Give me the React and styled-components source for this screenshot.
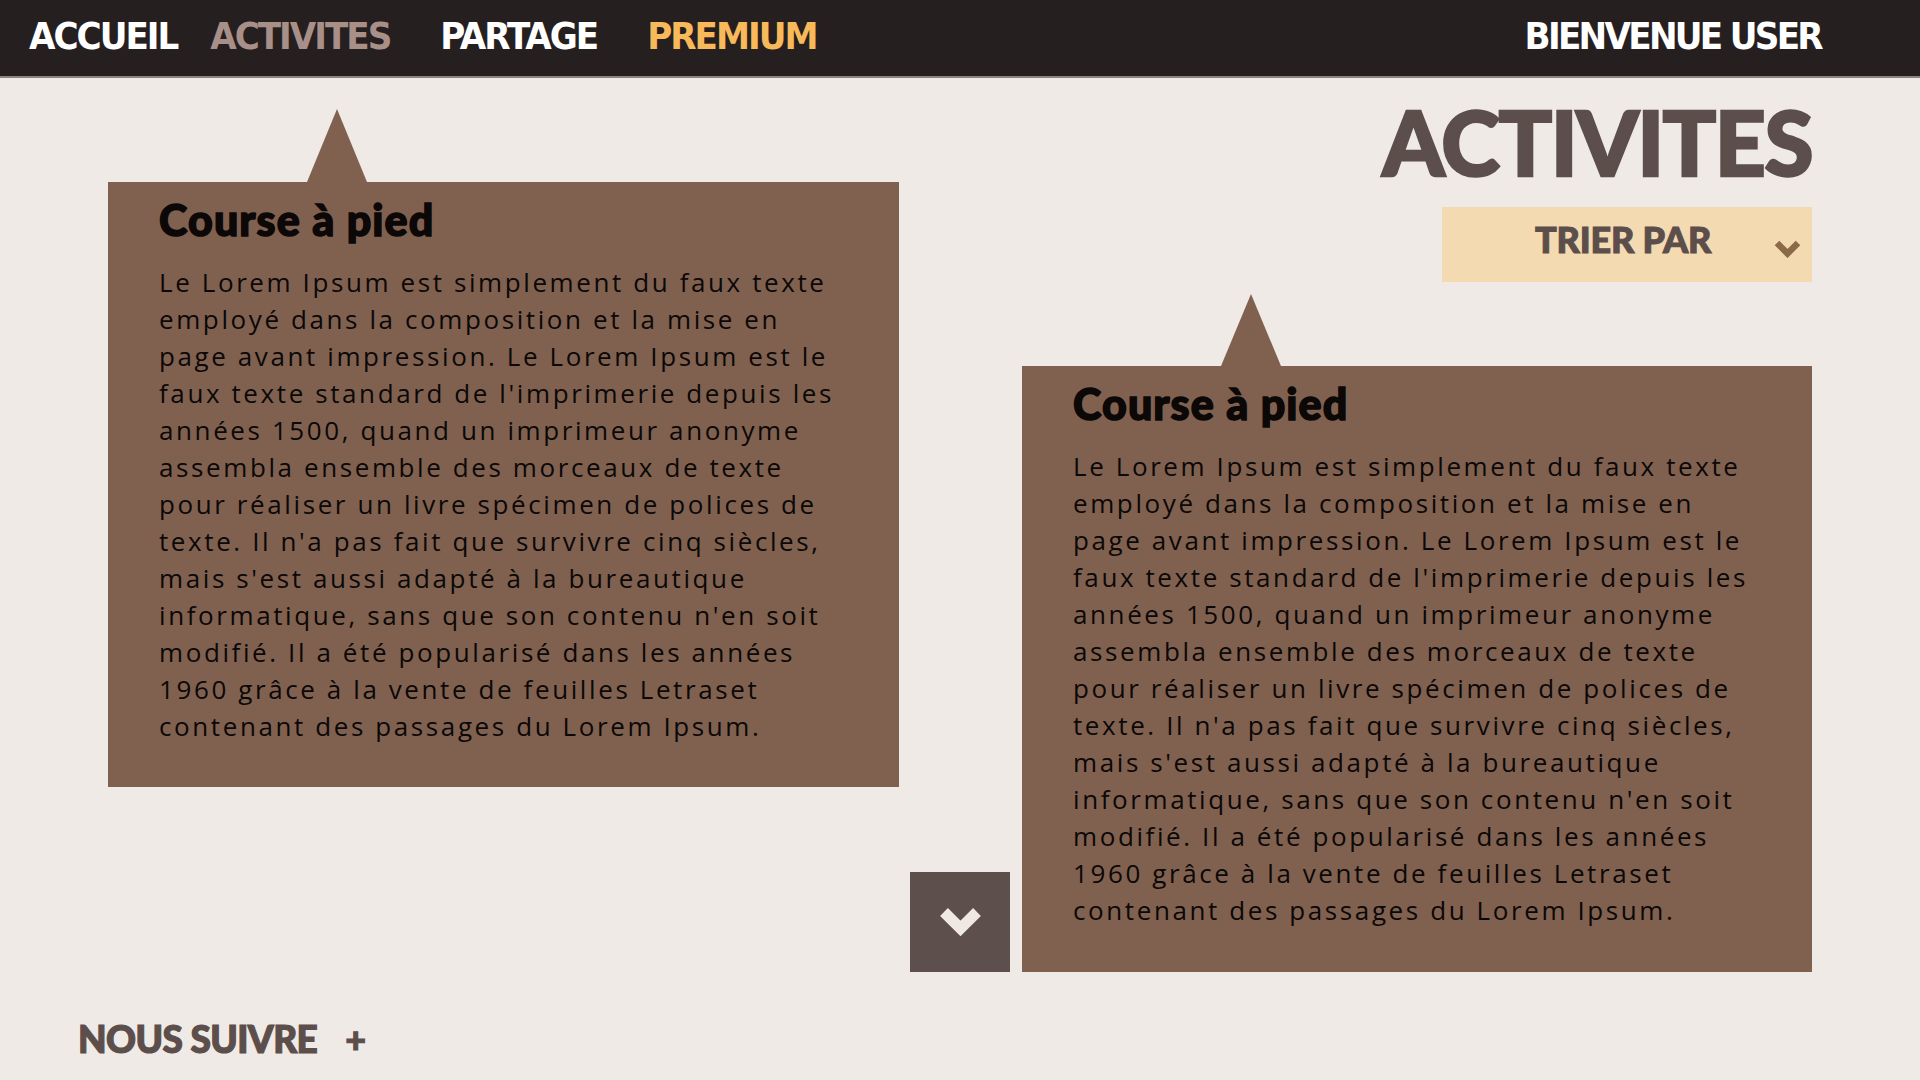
import React from "react";
import styled, { createGlobalStyle } from "styled-components";

const GlobalStyle = createGlobalStyle`
  html, body { margin: 0; padding: 0; background: #efeae6; }
  * { box-sizing: border-box; }
`;

const heavy = `"Lato Black", Lato, "Open Sans", sans-serif`;

const Page = styled.div`
  width: 1920px;
  height: 1080px;
  overflow: hidden;
  display: flex;
  flex-direction: column;
  background: #efeae6;
`;

const Nav = styled.nav`
  height: 78px;
  flex: 0 0 78px;
  background: #261f20;
  border-bottom: 2px solid #8d8482;
  display: flex;
  align-items: center;
  padding: 0 99px 4px 29px;
  font-family: "Liberation Sans Narrow", "DejaVu Sans Condensed", "Liberation Sans", sans-serif;
  font-weight: 700;
  font-size: 38px;
  letter-spacing: -2px;
`;

const NavLinks = styled.div`
  display: flex;
  align-items: center;
  gap: 50px;
`;

const NavLink = styled.a`
  color: ${(p) => p.$color || "#ffffff"};
  text-decoration: none;
  line-height: 1;
  &:first-child { margin-right: -17px; }
`;

const Welcome = styled.span`
  margin-left: auto;
  color: #ffffff;
  line-height: 1;
  letter-spacing: -2.7px;
`;

const Main = styled.main`
  flex: 0 0 900px;
  display: flex;
  align-items: flex-start;
  padding-left: 108px;
`;

const Column = styled.section`
  width: ${(p) => p.$width}px;
  display: flex;
  flex-direction: column;
`;

const Pointer = styled.div`
  width: 60px;
  height: ${(p) => p.$height}px;
  margin-top: ${(p) => p.$top}px;
  margin-left: 199px;
  background: #806150;
  clip-path: polygon(50% 0, 100% 100%, 0 100%);
`;

const Card = styled.article`
  height: ${(p) => p.$height}px;
  background: #806150;
  padding: 17px 30px 0 51px;
  color: #0b0807;
`;

const CardTitle = styled.h2`
  margin: 0;
  font-family: ${heavy};
  font-weight: 900;
  font-size: 43px;
  line-height: 42px;
  letter-spacing: 1.1px;
  -webkit-text-stroke: 1.5px currentColor;
`;

const CardBody = styled.p`
  margin: 23px 0 0;
  font-family: "Open Sans", Lato, sans-serif;
  font-weight: 500;
  font-size: 26px;
  line-height: 37px;
  letter-spacing: 2.6px;
`;

const Line = styled.span`
  display: block;
  white-space: nowrap;
`;

const DownButton = styled.button`
  align-self: flex-start;
  margin: 794px 12px 0 11px;
  width: 100px;
  height: 100px;
  border: 0;
  padding: 0;
  background: #5c4f4c;
  display: flex;
  align-items: center;
  justify-content: center;
  cursor: pointer;
`;

const PageTitle = styled.h1`
  margin: 19px 0 0 0;
  align-self: flex-end;
  font-family: ${heavy};
  font-weight: 900;
  font-size: 89px;
  line-height: 89px;
  letter-spacing: -1.5px;
  color: #5c4e4b;
  -webkit-text-stroke: 2.4px currentColor;
`;

const SortBox = styled.button`
  align-self: flex-end;
  margin-top: 21px;
  width: 370px;
  height: 75px;
  border: 0;
  background: #f4dab1;
  display: flex;
  align-items: center;
  padding: 0 11px 0 93px;
  font-family: ${heavy};
  font-weight: 900;
  font-size: 36px;
  color: #5c4e4b;
  cursor: pointer;
`;

const SortLabel = styled.span`
  line-height: 1;
  letter-spacing: -0.2px;
  margin-bottom: 11px;
  -webkit-text-stroke: 1px currentColor;
`;

const SortChevron = styled.svg`
  margin-left: auto;
  margin-top: 8px;
`;

const Footer = styled.footer`
  display: flex;
  align-items: center;
  padding: 42px 0 0 78px;
  font-family: ${heavy};
  font-weight: 900;
  font-size: 37px;
  color: #5c4e4b;
`;

const FooterLabel = styled.span`
  line-height: 1;
  letter-spacing: -0.6px;
  -webkit-text-stroke: 1.2px currentColor;
`;

const Plus = styled.span`
  margin-left: 28px;
  line-height: 1;
  font-size: 36px;
  -webkit-text-stroke: 1px currentColor;
`;

const lines = [
  "Le Lorem Ipsum est simplement du faux texte",
  "employé dans la composition et la mise en",
  "page avant impression. Le Lorem Ipsum est le",
  "faux texte standard de l'imprimerie depuis les",
  "années 1500, quand un imprimeur anonyme",
  "assembla ensemble des morceaux de texte",
  "pour réaliser un livre spécimen de polices de",
  "texte. Il n'a pas fait que survivre cinq siècles,",
  "mais s'est aussi adapté à la bureautique",
  "informatique, sans que son contenu n'en soit",
  "modifié. Il a été popularisé dans les années",
  "1960 grâce à la vente de feuilles Letraset",
  "contenant des passages du Lorem Ipsum.",
];

function ActivityCard({ height }) {
  return (
    <Card $height={height}>
      <CardTitle>Course à pied</CardTitle>
      <CardBody>
        {lines.map((l, i) => (
          <Line key={i}>{l}</Line>
        ))}
      </CardBody>
    </Card>
  );
}

export default function App() {
  return (
    <>
      <GlobalStyle />
      <Page>
        <Nav>
          <NavLinks>
            <NavLink href="#">ACCUEIL</NavLink>
            <NavLink href="#" $color="#a89089">ACTIVITES</NavLink>
            <NavLink href="#">PARTAGE</NavLink>
            <NavLink href="#" $color="#f7b95a">PREMIUM</NavLink>
          </NavLinks>
          <Welcome>BIENVENUE USER</Welcome>
        </Nav>
        <Main>
          <Column $width={791}>
            <Pointer $top={31} $height={73} />
            <ActivityCard height={605} />
          </Column>
          <DownButton aria-label="Suivant">
            <svg width="41" height="29" viewBox="0 0 41 29">
              <path d="M4 4 L20.5 20.5 L37 4" fill="none" stroke="#efe8e3" strokeWidth="11" />
            </svg>
          </DownButton>
          <Column $width={790}>
            <PageTitle>ACTIVITES</PageTitle>
            <SortBox>
              <SortLabel>TRIER PAR</SortLabel>
              <SortChevron width="27" height="19" viewBox="0 0 27 19">
                <path d="M3 4 L13.5 14.5 L24 4" fill="none" stroke="#8b6a47" strokeWidth="6.5" />
              </SortChevron>
            </SortBox>
            <Pointer $top={12} $height={72} />
            <ActivityCard height={606} />
          </Column>
        </Main>
        <Footer>
          <FooterLabel>NOUS SUIVRE</FooterLabel>
          <Plus>+</Plus>
        </Footer>
      </Page>
    </>
  );
}
